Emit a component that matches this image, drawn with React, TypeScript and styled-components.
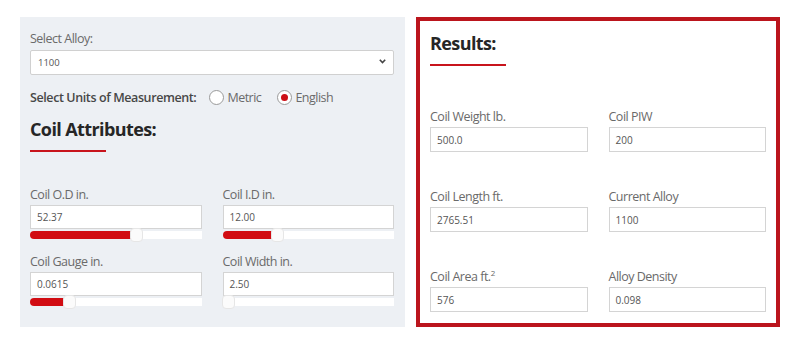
import React from 'react';
import styled, { createGlobalStyle } from 'styled-components';

const GlobalStyle = createGlobalStyle`
  html, body {
    margin: 0;
    padding: 0;
    background: #ffffff;
    font-family: 'Open Sans', 'Liberation Sans', sans-serif;
  }
`;

const Page = styled.div`
  display: flex;
  align-items: flex-start;
  gap: 11px;
  padding: 17px 0 0 20px;
`;

const InputPanel = styled.section`
  box-sizing: border-box;
  width: 385px;
  height: 310px;
  padding: 13px 11px 0 10px;
  background: #edf0f4;
  display: flex;
  flex-direction: column;
`;

const ResultsPanel = styled.section`
  box-sizing: border-box;
  width: 364px;
  height: 310px;
  border: 4px solid #bb151d;
  padding: 9px 10px 0 10px;
  display: flex;
  flex-direction: column;
`;

const FieldLabel = styled.label`
  display: block;
  font-size: 12.5px;
  letter-spacing: -0.5px;
  line-height: 18px;
  color: #6a6a6a;
`;

const SelectWrap = styled.div`
  position: relative;
  margin-top: 1px;
`;

const AlloySelect = styled.select`
  box-sizing: border-box;
  width: 100%;
  height: 25px;
  appearance: none;
  background: #ffffff;
  border: 1px solid #d0d0d0;
  border-radius: 2px;
  padding: 0 0 0 7px;
  font-family: 'Open Sans', 'Liberation Sans', sans-serif;
  font-size: 9.5px;
  color: #555;
  outline: none;
`;

const Chevron = styled.svg`
  position: absolute;
  right: 8px;
  top: 10px;
  pointer-events: none;
`;

const UnitsRow = styled.div`
  display: flex;
  align-items: center;
  height: 20px;
  margin-top: 12px;
`;

const UnitsTitle = styled.span`
  font-size: 12.5px;
  font-weight: 650;
  letter-spacing: -0.4px;
  color: #474747;
  margin-right: 13px;
`;

const RadioOption = styled.span`
  display: flex;
  align-items: center;
  gap: 3px;
  font-size: 12.5px;
  letter-spacing: -0.5px;
  color: #6a6a6a;
  margin-right: 16px;
`;

const RadioCircle = styled.span<{ $checked?: boolean }>`
  box-sizing: border-box;
  width: 15px;
  height: 15px;
  border-radius: 50%;
  border: 1px solid #9a9a9a;
  background: #fff;
  display: flex;
  align-items: center;
  justify-content: center;
  &::after {
    content: '';
    width: 7px;
    height: 7px;
    border-radius: 50%;
    background: ${({ $checked }) => ($checked ? '#cc0f16' : 'transparent')};
  }
`;

const Heading = styled.h2<{ $top?: number }>`
  margin: ${({ $top }) => $top ?? 0}px 0 0 0;
  font-size: 18px;
  letter-spacing: -0.6px;
  line-height: 26px;
  font-weight: 700;
  color: #262626;
`;

const Underline = styled.div`
  width: 76px;
  height: 2px;
  margin-top: 8px;
  background: #c8141c;
`;

const AttrGrid = styled.div`
  display: grid;
  grid-template-columns: 1fr 1fr;
  column-gap: 21px;
  row-gap: 14px;
  margin-top: 34px;
`;

const ResultGrid = styled.div`
  display: grid;
  grid-template-columns: 1fr 1fr;
  column-gap: 21px;
  row-gap: 36px;
  margin-top: 42px;
`;

const Field = styled.div`
  display: flex;
  flex-direction: column;
`;

const ValueBox = styled.div<{ $h: number }>`
  box-sizing: border-box;
  height: ${({ $h }) => $h}px;
  margin-top: 1px;
  background: #ffffff;
  border: 1px solid #d4d4d4;
  display: flex;
  align-items: center;
  padding-left: 6px;
  font-size: 10px;
  color: #555;
`;

const Track = styled.div`
  position: relative;
  height: 8px;
  margin-top: 2px;
  background: #ffffff;
  border-radius: 4px 0 0 4px;
`;

const Fill = styled.div`
  height: 100%;
  background: #d10c12;
  border-radius: 4px 0 0 4px;
`;

const Thumb = styled.div`
  position: absolute;
  top: -3px;
  width: 13px;
  height: 14px;
  margin-left: -1px;
  box-sizing: border-box;
  background: #fbfbfb;
  border: 1px solid #e6e6e6;
  border-radius: 4px;
`;

const Sup = styled.sup`
  font-size: 8px;
  line-height: 0;
`;

type Attr = { label: string; value: string; pct: number };

const attrs: Attr[] = [
  { label: 'Coil O.D in.', value: '52.37', pct: 59 },
  { label: 'Coil I.D in.', value: '12.00', pct: 29 },
  { label: 'Coil Gauge in.', value: '0.0615', pct: 20 },
  { label: 'Coil Width in.', value: '2.50', pct: 0 },
];

const results: { label: React.ReactNode; value: string }[] = [
  { label: 'Coil Weight lb.', value: '500.0' },
  { label: 'Coil PIW', value: '200' },
  { label: 'Coil Length ft.', value: '2765.51' },
  { label: 'Current Alloy', value: '1100' },
  { label: <>Coil Area ft.<Sup>2</Sup></>, value: '576' },
  { label: 'Alloy Density', value: '0.098' },
];

export default function App() {
  return (
    <>
      <GlobalStyle />
      <Page>
        <InputPanel>
          <FieldLabel>Select Alloy:</FieldLabel>
          <SelectWrap>
            <AlloySelect defaultValue="1100">
              <option value="1100">1100</option>
              <option value="3003">3003</option>
              <option value="5052">5052</option>
            </AlloySelect>
            <Chevron width="7" height="5" viewBox="0 0 7 5">
              <path d="M0.8 0.8 L3.5 3.6 L6.2 0.8" fill="none" stroke="#444" strokeWidth="1.6" />
            </Chevron>
          </SelectWrap>
          <UnitsRow>
            <UnitsTitle>Select Units of Measurement:</UnitsTitle>
            <RadioOption>
              <RadioCircle />
              Metric
            </RadioOption>
            <RadioOption>
              <RadioCircle $checked />
              English
            </RadioOption>
          </UnitsRow>
          <Heading $top={9}>Coil Attributes:</Heading>
          <Underline />
          <AttrGrid>
            {attrs.map((a) => (
              <Field key={a.value}>
                <FieldLabel>{a.label}</FieldLabel>
                <ValueBox $h={24}>{a.value}</ValueBox>
                <Track>
                  <Fill style={{ width: `${a.pct}%` }} />
                  <Thumb style={{ left: `${a.pct}%` }} />
                </Track>
              </Field>
            ))}
          </AttrGrid>
        </InputPanel>
        <ResultsPanel>
          <Heading>Results:</Heading>
          <Underline />
          <ResultGrid>
            {results.map((r) => (
              <Field key={r.value}>
                <FieldLabel>{r.label}</FieldLabel>
                <ValueBox $h={25}>{r.value}</ValueBox>
              </Field>
            ))}
          </ResultGrid>
        </ResultsPanel>
      </Page>
    </>
  );
}
